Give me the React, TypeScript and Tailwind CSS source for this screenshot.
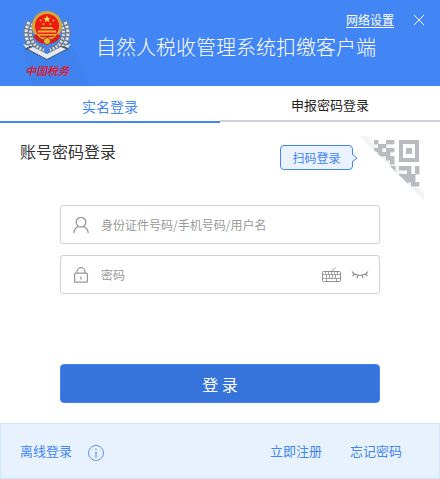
import React, { useState } from 'react';

// each group of modules: left, top and its rows
const QR_GROUPS = [
    { x: 18, y: 6, rows: ['#..##', '.##..', '##.##', '.###.', '...##', '....#'] },
    { x: 31, y: 32, rows: ['##', '.#', '.#'] },
    { x: 43, y: 32, rows: ['###.#', '..#.#', '####.', '.###.', '.#.##'] },
];

const Emblem: React.FC = () => (
    <svg className="h-[52px] w-12 shrink-0" viewBox="0 0 48 52" fill="none" aria-hidden="true">
        <path d="M8 12C1 24 6 37 21 42M40 12c7 12 2 25-13 30" stroke="#6d7c92" strokeWidth="9" />
        <path d="M6 12C-1 25 5 39 19 43M42 12c7 13 1 27-13 31" stroke="#dfe5ec" strokeWidth="3" strokeDasharray="2.500 1.500" />
        <path d="M10 14C4 25 9 36 21 40M38 14c6 11 1 22-11 26" stroke="#d3dae2" strokeWidth="3" strokeDasharray="2 1.500" />
        <path d="M0 34l8 2 16 8 16-8 8-2-3 4 1 1-5 2-17 9-17-9-5-2 1-1z" fill="#46566c" />
        <path d="M5 39l5-2 14 7 14-7 5 2-19 10z" fill="#e4e9ee" />
        <path d="M0 34l7 2-4 2zM48 34l-7 2 4 2z" fill="#e4e9ee" />
        <path d="M24 1c9 0 15 7 15 15 0 7-5 12-9 16l-6 3-6-3C14 28 9 23 9 16 9 8 15 1 24 1z" fill="#d3a53c" />
        <path d="M24 4c7 0 12 5 12 12 0 5-3 9-6 11H18c-3-2-6-6-6-11C12 9 17 4 24 4z" fill="#ee1b12" />
        <path d="M24 5.500l1 2.400 2.600.2-2 1.700.7 2.500-2.300-1.400-2.300 1.400.7-2.500-2-1.700 2.600-.2z" fill="#ffe14a" />
        <g fill="#f4b63a">
            <circle cx="17.500" cy="10.500" r="1" />
            <circle cx="30.500" cy="10.500" r="1" />
            <circle cx="20.500" cy="14" r="1" />
            <circle cx="27.500" cy="14" r="1" />
            <path d="M19 17h10l2 2H17zM15 20.500h18v2H15zM14 24h20l-1 1.500H15z" />
        </g>
        <path d="M12 25c2 4 5 6 9 7M36 25c-2 4-5 6-9 7" stroke="#d51f18" strokeWidth="4" />
        <circle cx="24" cy="31" r="3.500" fill="#e5b93d" stroke="#b9281c" />
    </svg>
);

const QrCorner: React.FC = () => (
    <svg className="absolute right-0 top-0 h-[72px] w-[84px]" viewBox="0 0 84 72" aria-hidden="true">
        <defs>
            <linearGradient id="fold" gradientUnits="userSpaceOnUse" x1="35" y1="33" x2="42" y2="26">
                <stop offset="0" stopColor="#eeeff0" />
                <stop offset="1" stopColor="#ffffff" />
            </linearGradient>
            <clipPath id="upper">
                <path d="M2 0H84V72H74z" />
            </clipPath>
        </defs>
        <path d="M4 2h8L68 57v9z" fill="url(#fold)" />
        <g clipPath="url(#upper)" fill="#b9bbc1">
            {QR_GROUPS.map((group) =>
                group.rows.map((row, y) =>
                    row.split('').map((cell, x) =>
                        cell === '#' ? (
                            <rect key={`${group.x}-${group.y}-${x}-${y}`} x={group.x + x * 4} y={group.y + y * 4} width="4.400" height="4.400" />
                        ) : null
                    )
                )
            )}
            <path fillRule="evenodd" d="M43 6h20v22H43zM47 10v14h12V10z" />
            <rect x="50" y="14" width="6" height="6" />
        </g>
    </svg>
);

const App: React.FC = () => {
    const [tab, setTab] = useState('realname');
    const [account, setAccount] = useState('');
    const [password, setPassword] = useState('');

    const tabClass = (active: boolean) =>
        active
            ? 'h-[37px] flex-1 border-b-2 border-[#4285f4] pt-1 text-sm text-[#4285f4]'
            : 'h-9 flex-1 border-b-2 border-[#d0d0d8] pt-1 text-[13px] text-[#222222]';

    return (
        <div className="flex min-h-screen flex-col bg-white font-['Noto_Sans_CJK_SC',sans-serif]">
            <header className="relative flex h-[86px] items-start overflow-hidden bg-[#4285f4] pl-[23px]">
                <svg className="absolute left-0 top-0 h-[86px] w-[100px]" viewBox="0 0 100 86" aria-hidden="true">
                    <path d="M23 50L72 45L89 86H33z" fill="#3f81ed" />
                </svg>
                <div className="relative flex w-12 flex-col items-center pt-[10px]">
                    <Emblem />
                    <span className="text-[11px] font-medium italic leading-4 whitespace-nowrap text-[#e6141c]">中国税务</span>
                </div>
                <h1 className="ml-[25px] pt-8 text-xl leading-[30px] font-light whitespace-nowrap text-white">自然人税收管理系统扣缴客户端</h1>
                <div className="absolute right-4 top-[10px] flex items-center gap-[20px]">
                    <a href="#network" className="text-xs leading-5 text-white underline underline-offset-2">网络设置</a>
                    <button type="button" aria-label="关闭">
                        <svg className="h-[10px] w-[10px]" viewBox="0 0 10 10" stroke="#ffffff" strokeWidth="1">
                            <path d="M0 0l10 10M10 0L0 10" />
                        </svg>
                    </button>
                </div>
            </header>

            <nav className="flex items-start">
                <button type="button" onClick={() => setTab('realname')} className={tabClass(tab === 'realname')}>实名登录</button>
                <button type="button" onClick={() => setTab('password')} className={tabClass(tab === 'password')}>申报密码登录</button>
            </nav>

            <main className="relative flex-1">
                <div className="flex items-start justify-between pl-5 pr-[87px] pt-4">
                    <h2 className="text-base leading-6 text-[#333333]">账号密码登录</h2>
                    <button type="button" className="relative mt-[6px] h-[25px] w-[73px] rounded-sm border border-[#4285f4] bg-[#e9f2fd] text-xs text-[#4285f4]">
                        扫码登录
                        <svg className="absolute -right-[6px] top-[8px] h-2 w-[6px]" viewBox="0 0 6 8">
                            <path d="M0 0l5 4-5 4" fill="#e9f2fd" stroke="#4285f4" />
                        </svg>
                    </button>
                </div>
                <div className="absolute right-0 top-[11px]">
                    <QrCorner />
                </div>

                <form className="px-[60px] pt-[35px]" onSubmit={(e) => e.preventDefault()}>
                    <label className="flex h-[39px] items-center rounded-[3px] border border-[#d0d0d8] pl-3">
                        <svg className="h-4 w-4 shrink-0" viewBox="0 0 16 16" fill="none" stroke="#999999" strokeWidth="1.300" aria-hidden="true">
                            <circle cx="8" cy="5.200" r="4.800" />
                            <path d="M.8 16c.2-3.500 2.200-5.500 5-6.600M15.200 16c-.2-3.500-2.200-5.500-5-6.600" />
                        </svg>
                        <input
                            type="text"
                            value={account}
                            onChange={(e) => setAccount(e.target.value)}
                            placeholder="身份证件号码/手机号码/用户名"
                            className="ml-3 min-w-0 flex-1 text-xs text-[#333333] outline-none placeholder:text-[#999999]"
                            aria-label="身份证件号码/手机号码/用户名"
                        />
                    </label>
                    <div className="mt-[11px] flex h-[39px] items-center rounded-[3px] border border-[#d0d0d8] pl-3 pr-[10px]">
                        <svg className="h-4 w-4 shrink-0" viewBox="0 0 16 16" fill="none" stroke="#999999" strokeWidth="1.300" aria-hidden="true">
                            <rect x="1.600" y="6.200" width="12.800" height="9" rx="1" />
                            <path d="M4 6.200V4.700a4 4 0 0 1 8 0v1.500M8 9.500v3" />
                        </svg>
                        <input
                            type="password"
                            value={password}
                            onChange={(e) => setPassword(e.target.value)}
                            placeholder="密码"
                            className="ml-3 min-w-0 flex-1 text-xs text-[#333333] outline-none placeholder:text-[#999999]"
                            aria-label="密码"
                        />
                        <button type="button" aria-label="软键盘">
                            <svg className="h-4 w-5" viewBox="0 0 20 16" fill="none" stroke="#8f8f8f" aria-hidden="true">
                                <rect x=".5" y="4.500" width="18" height="10" rx="1" />
                                <path d="M9.500 4.500c0-2 2-1 2.500-2.500L13.500.8M.5 7.500h18M.5 11.500h18M3.500 4.500v3M6.500 4.500v3M9.500 4.500v3M12.500 4.500v3M15.500 4.500v3M4.500 7.500v4M7.500 7.500v4M10.500 7.500v4M13.500 7.500v4M4.500 11.500v3M14.500 11.500v3" strokeWidth=".8" />
                            </svg>
                        </button>
                        <button type="button" aria-label="显示密码" className="ml-[9px]">
                            <svg className="h-4 w-[18px]" viewBox="0 0 18 16" fill="none" stroke="#8c8c8c" strokeWidth="1.200" aria-hidden="true">
                                <path d="M1 4.500c3 5 13 5 16 0M3.500 7L1.500 9.200M6.800 8.400L6 11.200M11.200 8.400l.8 2.800M14.500 7l2 2.200" />
                            </svg>
                        </button>
                    </div>
                    <button type="submit" className="mt-[70px] h-[39px] w-full rounded-[4px] border border-[#4285f4] bg-[#3674dc] text-base text-white">
                        登 录
                    </button>
                </form>
            </main>

            <footer className="flex h-14 items-center border border-[#d0e6fc] bg-[#e8f2fe] pl-[19px] pr-[37px] text-[13px] text-[#4285f4]">
                <a href="#offline">离线登录</a>
                <button type="button" aria-label="离线登录说明" className="ml-4 mt-1">
                    <svg className="h-4 w-4" viewBox="0 0 16 16" fill="none" stroke="#5b96f5" aria-hidden="true">
                        <circle cx="8" cy="8" r="7.500" />
                        <path d="M8 3.500v1.500M8 6.500v6" strokeWidth="1.200" />
                    </svg>
                </button>
                <a href="#register" className="ml-auto">立即注册</a>
                <a href="#forgot" className="ml-7">忘记密码</a>
            </footer>
        </div>
    );
};

export default App;
